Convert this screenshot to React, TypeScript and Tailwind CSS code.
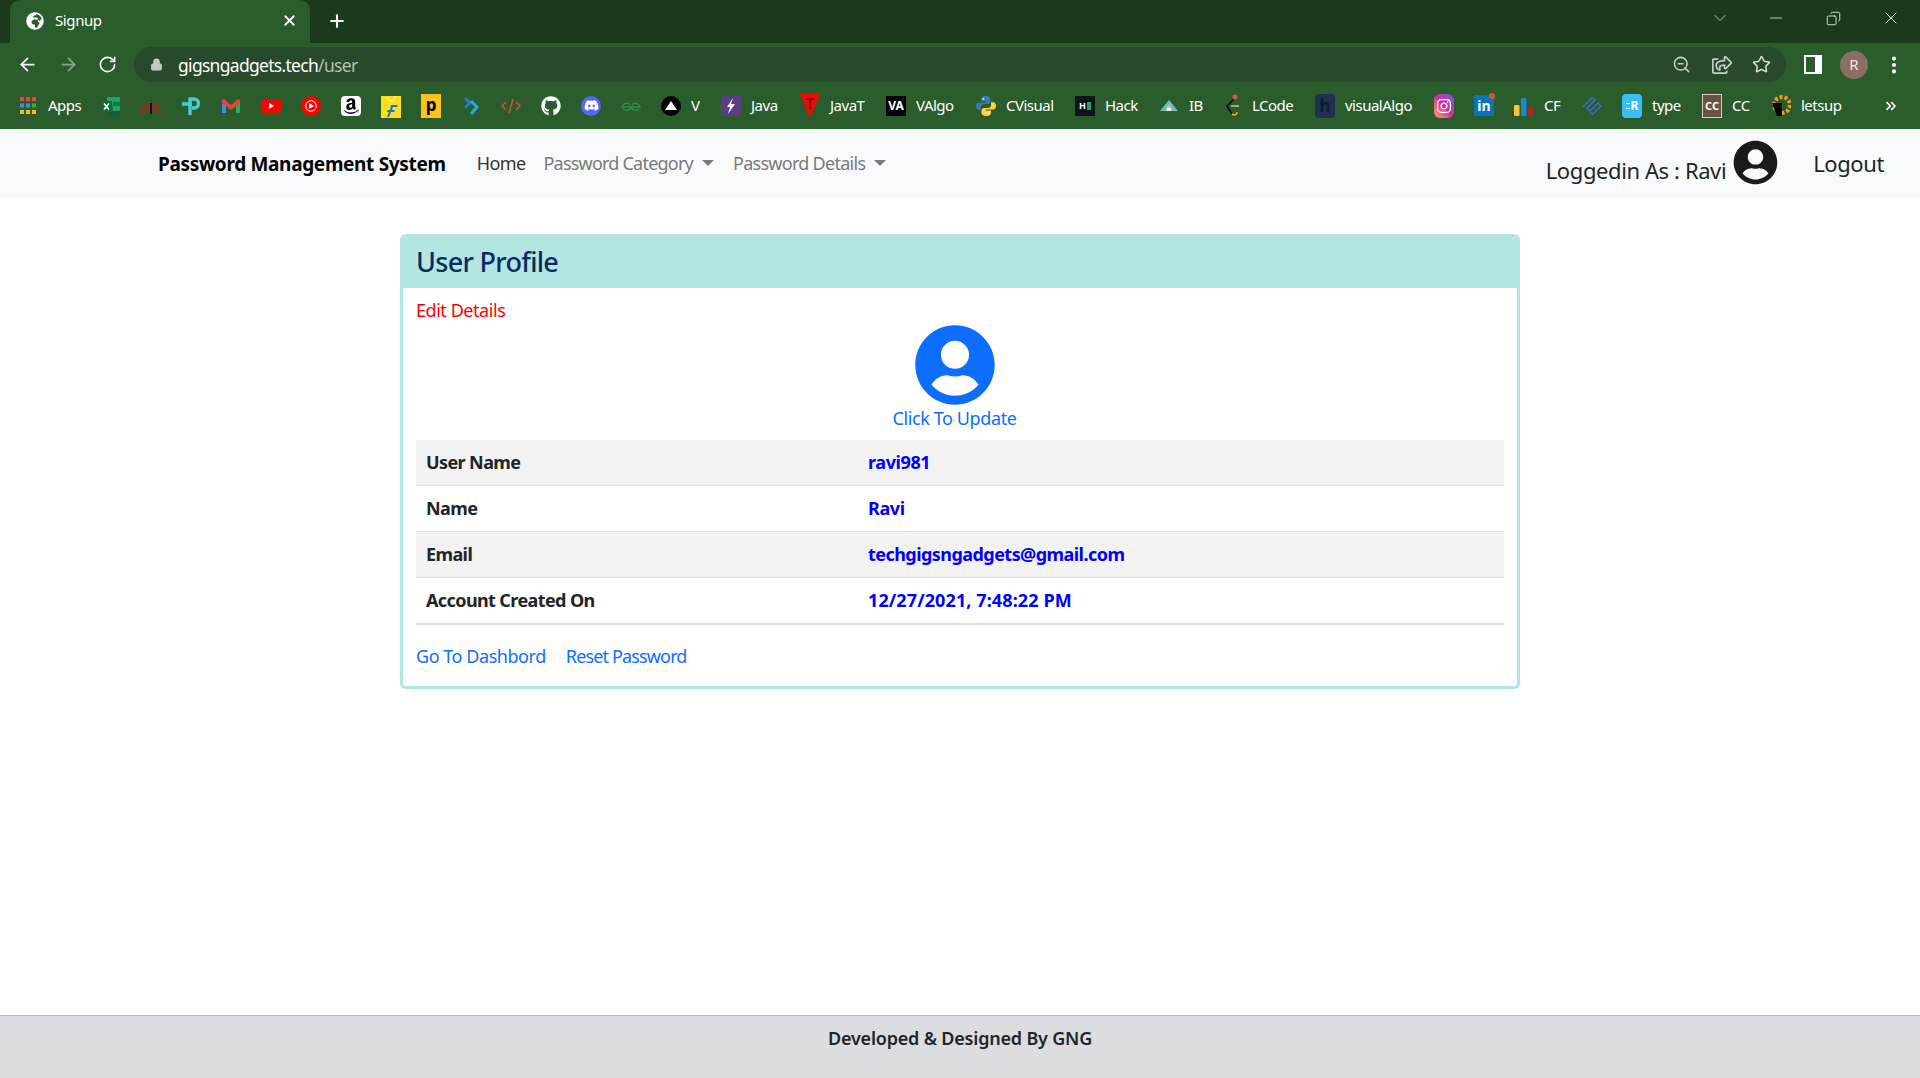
import React from 'react';
import { ArrowLeft, ArrowRight, RotateCw, Lock, Plus, X, ChevronDown, Minus, ZoomOut, Star, Copy, EllipsisVertical, ChevronsRight } from 'lucide-react';
import { FaGithub, FaDiscord, FaAmazon, FaGlobeAfrica, FaInstagram, FaUserCircle, FaRegShareSquare } from 'react-icons/fa';

const Box = ({ className, children }: { className: string; children?: React.ReactNode }) => (
  <span className={`flex h-5 w-5 items-center justify-center ${className}`}>{children}</span>
);

const icons: Record<string, React.ReactNode> = {
  apps: (
    <svg viewBox="0 0 16 17" className="mr-[4px] h-[17px] w-4">
      <path fill="#ea4335" d="M0 0h4v4H0zM6 0h4v4H6zM12 0h4v4h-4z" />
      <path fill="#4285f4" d="M0 6.500h4v4H0zM6 6.500h4v4H6z" />
      <path fill="#34a853" d="M12 6.500h4v4h-4z" />
      <path fill="#fbbc04" d="M0 13h4v4H0zM6 13h4v4H6zM12 13h4v4h-4z" />
    </svg>
  ),
  excel: (
    <svg viewBox="0 0 20 20" className="h-5 w-5">
      <path fill="#21a366" d="M6 1h13v18H6z" />
      <path fill="#107c41" d="M12 6h7v4h-7zM6 10h6v5H6z" />
      <path fill="#185c37" d="M6 15h13v4H6z" />
      <path fill="#0f6b3a" d="M0 5h11v11H0z" />
      <path stroke="#fff" strokeWidth="1.6" d="M3 7.500l5 6M8 7.500l-5 6" />
    </svg>
  ),
  gauge: (
    <svg viewBox="0 0 20 20" className="h-5 w-5" fill="none" stroke="#d3131b" strokeWidth="1.5">
      <path d="M1 17a9 9 0 0 1 18 0M5 17a5 5 0 0 1 10 0" />
      <path stroke="#111" strokeWidth="2" d="M10 7v11" />
    </svg>
  ),
  tp: (
    <svg viewBox="0 0 20 20" className="h-5 w-5" fill="none" stroke="#4acbd6" strokeWidth="3.4">
      <path d="M1 8h8v11" />
      <path d="M9 10V3h4a4.500 4.500 0 0 1 0 9h-2" />
    </svg>
  ),
  gmail: (
    <svg viewBox="0 0 20 20" className="h-5 w-5">
      <path fill="#4285f4" d="M1 4h4v13H1z" />
      <path fill="#34a853" d="M15 4h4v13h-4z" />
      <path fill="#ea4335" d="M1 4l2-1 7 6 7-6 2 1v3l-9 7-9-7z" />
    </svg>
  ),
  youtube: (
    <svg viewBox="0 0 20 20" className="h-5 w-5">
      <rect x="0" y="3" width="20" height="14" rx="3" fill="#f00" />
      <path fill="#fff" d="M8 7l5 3-5 3z" />
    </svg>
  ),
  ytmusic: (
    <svg viewBox="0 0 20 20" className="h-5 w-5">
      <circle cx="10" cy="10" r="10" fill="#f00" />
      <circle cx="10" cy="10" r="5.300" fill="none" stroke="#fff" />
      <path fill="#fff" d="M8 7l5 3-5 3z" />
    </svg>
  ),
  amazon: (
    <Box className="rounded-sm bg-white">
      <FaAmazon className="h-[18px] w-[18px] text-black" />
    </Box>
  ),
  flipkart: (
    <svg viewBox="0 0 20 24" className="h-6 w-5">
      <path fill="#f9e11e" d="M0 2h20v22H0z" />
      <path fill="none" stroke="#fff6a8" d="M6 3c0 5 8 5 8 0" />
      <path fill="#1f74ba" d="M10 11h7l-1 2h-4l-1 3h3l-1 2h-3l-2 5H6l2-5H6l1-2h2z" />
    </svg>
  ),
  paytm: (
    <Box className="h-6 bg-[#fcc419] pb-[3px] text-[17px] leading-none font-bold text-black">p</Box>
  ),
  arrow: (
    <svg viewBox="0 0 20 20" className="h-5 w-5" fill="none" stroke="#29a9e0" strokeWidth="3">
      <path d="M4 2l5 5-5 5" stroke="#1f7fc0" />
      <path d="M10 5l6 6-6 7" />
    </svg>
  ),
  code: (
    <svg viewBox="0 0 20 20" className="h-5 w-5" fill="none" stroke="#e04a3a" strokeWidth="1.500">
      <path d="M5 6l-4 4 4 4M15 6l4 4-4 4M12 3l-4 14" />
    </svg>
  ),
  github: <FaGithub className="h-5 w-5 text-white" />,
  discord: (
    <Box className="rounded-full bg-[#5865f2]">
      <FaDiscord className="h-[15px] w-[15px] text-white" />
    </Box>
  ),
  geeks: (
    <svg viewBox="0 0 20 20" className="h-5 w-5" fill="none" stroke="#2f8d46" strokeWidth="1.500">
      <path d="M10 11H1c1-4 6-5 8-2M10 11h9c-1-4-6-5-8-2M10 11c-1 4-6 4-8 2M10 11c1 4 6 4 8 2" />
    </svg>
  ),
  vercel: (
    <svg viewBox="0 0 20 20" className="h-5 w-5">
      <circle cx="10" cy="10" r="10" fill="#000" />
      <path fill="#fff" d="M10 5l6 9H4z" />
    </svg>
  ),
  bolt: (
    <Box className="bg-[#5a3e85]">
      <svg viewBox="0 0 20 20" className="h-5 w-5">
        <path fill="#fff" d="M12 2L6 11h3l-2 7 7-10h-4z" />
      </svg>
    </Box>
  ),
  tpoint: (
    <svg viewBox="0 0 20 24" className="h-6 w-5">
      <path fill="#f00" d="M0 0h20L10 24z" />
      <path fill="#7a0c0c" d="M6 4h8v2h-3v9H9V6H6z" />
    </svg>
  ),
  valgo: (
    <Box className="bg-black text-[12px] leading-none font-bold text-white">VA</Box>
  ),
  python: (
    <svg viewBox="0 0 20 20" className="h-5 w-5">
      <path fill="#3d7aab" d="M10 0C6 0 5 1.500 5 3v2.500h5.200v1H3c-2 0-3 1.500-3 3.500s1 3.800 3 3.800h2V11c0-1.800 1.200-3 3-3h4c1.300 0 2.500-1.100 2.500-2.500V3c0-1.500-1.500-3-4.500-3z" />
      <path fill="#ffd43b" d="M10 20c4 0 5-1.500 5-3v-2.500H9.800v-1H17c2 0 3-1.500 3-3.500s-1-3.800-3-3.800h-2V9c0 1.800-1.200 3-3 3H8c-1.300 0-2.500 1.100-2.500 2.500V17c0 1.500 1.500 3 4.500 3z" />
      <circle cx="7.500" cy="2.800" r="0.900" fill="#fff" />
      <circle cx="12.500" cy="17.200" r="0.900" fill="#fff" />
    </svg>
  ),
  hack: (
    <Box className="gap-[1px] bg-[#0e141e] text-[9px] leading-none font-bold text-white">
      H<span className="h-2 w-1 bg-[#1ba94c]" />
    </Box>
  ),
  ib: (
    <svg viewBox="0 0 20 20" className="h-5 w-5">
      <path fill="#5cc6d0" d="M10 4l9 11h-5l-4-5-4 5H1z" />
      <path fill="#f4b860" d="M10 8l4 7H6z" />
      <path fill="#eef" d="M8 12h4v3H8z" />
    </svg>
  ),
  lcode: (
    <svg viewBox="0 0 20 24" className="h-6 w-5" fill="none" strokeWidth="1.700">
      <path stroke="#111" d="M12 5L5 12l5 8" />
      <path stroke="#f89f1b" d="M10 20c3 2 5 0 5-2" />
      <path stroke="#b3b3b3" d="M9 12h8" />
      <circle cx="13" cy="3" r="2.500" fill="#d9534f" stroke="none" />
    </svg>
  ),
  h: (
    <Box className="h-6 rounded-sm bg-[#1f3050] text-[17px] leading-none font-bold text-[#0f1c33]">h</Box>
  ),
  instagram: (
    <Box className="h-6 rounded-md bg-gradient-to-tr from-[#f9a03f] via-[#d6249f] to-[#5b51d8]">
      <FaInstagram className="h-4 w-4 text-white" />
    </Box>
  ),
  linkedin: (
    <Box className="relative h-[21px] bg-[#0a75b5] text-[14px] leading-none font-bold text-white">
      in
      <span className="absolute -top-[2px] -right-[1px] h-[6px] w-[6px] rounded-full bg-[#e0533d]" />
    </Box>
  ),
  cf: (
    <svg viewBox="0 0 20 20" className="h-5 w-5">
      <rect x="0" y="9" width="5.500" height="11" rx="1" fill="#f4c542" />
      <rect x="7" y="2" width="5.500" height="18" rx="1" fill="#1f8acb" />
      <rect x="14" y="11" width="5.500" height="9" rx="1" fill="#b5202a" />
    </svg>
  ),
  swirl: (
    <svg viewBox="0 0 20 20" className="h-5 w-5" fill="none" stroke="#4166d5" strokeWidth="1.500">
      <path d="M1 11l9-9 3 2-8 8 3 3 8-8 3 3-8 8-3-1" />
    </svg>
  ),
  rtype: (
    <Box className="h-6 gap-[1px] rounded-sm bg-[#38bdf8] text-[12px] leading-none font-bold text-white">
      <span className="h-[6px] w-1 border-y border-white" />R
    </Box>
  ),
  cc: (
    <Box className="h-6 border border-[#d8cfc0] bg-[#6b5344] text-[11px] leading-none font-bold text-white">CC</Box>
  ),
  letsup: (
    <svg viewBox="0 0 20 24" className="h-6 w-5">
      <circle cx="11" cy="11" r="8" fill="none" stroke="#f79a1e" strokeWidth="4" strokeDasharray="3 2" />
      <path fill="#000" d="M1 9h10v13H6z" />
    </svg>
  ),
};

// label widths are pinned so the bar keeps the spacing of the original font
const bookmarks = [
  { icon: 'apps', label: 'Apps', width: '-ml-[2px] w-[33px]' },
  { icon: 'excel' }, { icon: 'gauge' }, { icon: 'tp' }, { icon: 'gmail' }, { icon: 'youtube' }, { icon: 'ytmusic' },
  { icon: 'amazon' }, { icon: 'flipkart' }, { icon: 'paytm' }, { icon: 'arrow' }, { icon: 'code' }, { icon: 'github' },
  { icon: 'discord' }, { icon: 'geeks' },
  { icon: 'vercel', label: 'V', width: 'w-[10px]' },
  { icon: 'bolt', label: 'Java', width: 'w-[29px]' },
  { icon: 'tpoint', label: 'JavaT', width: 'w-[36px]' },
  { icon: 'valgo', label: 'VAlgo', width: 'w-[40px]' },
  { icon: 'python', label: 'CVisual', width: 'w-[49px]' },
  { icon: 'hack', label: 'Hack', width: 'w-[34px]' },
  { icon: 'ib', label: 'IB', width: 'w-[13px]' },
  { icon: 'lcode', label: 'LCode', width: 'w-[43px]' },
  { icon: 'h', label: 'visualAlgo', width: 'w-[69px]' },
  { icon: 'instagram' }, { icon: 'linkedin' },
  { icon: 'cf', label: 'CF', width: 'w-[18px]' },
  { icon: 'swirl' },
  { icon: 'rtype', label: 'type', width: 'w-[30px]' },
  { icon: 'cc', label: 'CC', width: 'w-[19px]' },
  { icon: 'letsup', label: 'letsup', width: 'w-[41px]' },
];

const rows = [
  { name: 'User Name', value: 'ravi981', bg: 'bg-[#f2f2f2]', track: 'tracking-[-0.4px]', height: 'h-[46px]' },
  { name: 'Name', value: 'Ravi', bg: 'bg-white', track: 'tracking-[-0.4px]', height: 'h-[46px]' },
  { name: 'Email', value: 'techgigsngadgets@gmail.com', bg: 'bg-[#f2f2f2]', track: 'tracking-[-0.55px]', height: 'h-[46px]' },
  { name: 'Account Created On', value: '12/27/2021, 7:48:22 PM', bg: 'bg-white', track: 'tracking-[0.1px]', height: 'h-[45px]' },
];

const BrowserChrome = () => (
  <div className="text-white">
    <div className="flex h-[43px] items-end bg-[#1b3a1b] pl-[10px]">
      <div className="relative flex h-[43px] w-[300px] items-center rounded-t-[10px] bg-[#2a5c2c] pr-[12px] pb-[2px] pl-[16px]">
        <FaGlobeAfrica className="h-[18px] w-[18px]" />
        <span className="ml-[11px] flex-1 text-[15px] tracking-[-0.4px]">Signup</span>
        <X className="h-[17px] w-[17px]" strokeWidth={2.5} />
      </div>
      <Plus className="mb-[12px] ml-[17px] h-5 w-5" strokeWidth={2.5} />
      <div className="mb-[15px] flex flex-1 items-center justify-end text-[#dfe6df]">
        <ChevronDown className="mr-[36px] h-5 w-5" strokeWidth={1} />
        <Minus className="mr-[40px] h-5 w-5" strokeWidth={1} />
        <Copy className="mr-[40px] h-[15px] w-[15px] -scale-x-100" strokeWidth={1.5} />
        <X className="mr-[19px] h-5 w-5" strokeWidth={1.2} />
      </div>
    </div>
    <div className="flex h-[43px] items-center bg-[#2a5c2c] pl-[17px]">
      <ArrowLeft className="h-[21px] w-[21px]" strokeWidth={2} />
      <ArrowRight className="ml-[20px] h-[21px] w-[21px] text-[#8ba58c]" strokeWidth={2} />
      <RotateCw className="ml-[19px] h-[19px] w-[19px]" strokeWidth={2} />
      <div className="ml-[17px] flex h-[35px] flex-1 items-center rounded-full bg-[#28492a] pr-[15px] pl-[16px]">
        <Lock className="h-[13px] w-[13px] fill-[#bfc9bf] text-[#bfc9bf]" />
        <span className="ml-[15px] flex-1 pt-[2px] text-[17.5px] tracking-[-0.7px]">
          gigsngadgets.tech<span className="text-[#b3c0b3]">/user</span>
        </span>
        <ZoomOut className="h-[19px] w-[19px] text-[#c6cfc6]" />
        <FaRegShareSquare className="ml-[21px] h-[18px] w-[20px] text-[#c6cfc6]" />
        <Star className="ml-[20px] h-[19px] w-[19px] text-[#d3dad3]" />
      </div>
      <div className="ml-[18px] flex h-[19px] w-[18px] justify-end border-2 border-white">
        <span className="h-full w-[5px] bg-white" />
      </div>
      <span className="ml-[18px] flex h-[28px] w-[28px] items-center justify-center rounded-full bg-[#8d6e63] text-[15px] text-[#f2e6e0]">R</span>
      <EllipsisVertical className="mr-[15px] ml-[15px] h-[22px] w-[22px]" strokeWidth={2.5} />
    </div>
    <div className="flex h-[43px] items-center bg-[#2a5c2c] pb-[4px] pl-[10px]">
      {bookmarks.map((b, i) => (
        <div key={i} className="flex shrink-0 items-center gap-[10px] px-[10px]">
          <span className="flex h-5 w-5 items-center justify-center">{icons[b.icon]}</span>
          {b.label && <span className={`${b.width} text-[15px] tracking-[-0.5px] whitespace-nowrap`}>{b.label}</span>}
        </div>
      ))}
      <ChevronsRight className="mr-[21px] ml-auto h-4 w-4" strokeWidth={2.5} />
    </div>
  </div>
);

const Navbar = () => (
  <nav className="flex h-[70px] items-center bg-[#f8f9fa] pr-[36px] pb-[2px] pl-[158px] text-[#212529]">
    <span className="pt-[2px] text-[19px] font-bold tracking-[-0.33px] text-black">Password Management System</span>
    <a className="ml-[31px] text-[18px] tracking-[-0.6px] text-[#333]">Home</a>
    <a className="ml-[18px] flex items-center text-[18px] tracking-[-0.78px] text-[#7a7a7a]">
      Password Category
      <span className="ml-[9px] h-0 w-0 border-x-[6px] border-t-[6px] border-x-transparent border-t-[#7a7a7a]" />
    </a>
    <a className="ml-[19px] flex items-center text-[18px] tracking-[-0.72px] text-[#7a7a7a]">
      Password Details
      <span className="ml-[9px] h-0 w-0 border-x-[6px] border-t-[6px] border-x-transparent border-t-[#7a7a7a]" />
    </a>
    <span className="mt-[14px] ml-auto text-[22px] tracking-[-0.4px]">Loggedin As : Ravi</span>
    <FaUserCircle className="mb-[2px] ml-[7px] h-[45px] w-[45px] text-[#1a1a1a]" />
    <a className="ml-[35px] text-[22px] tracking-[-0.4px]">Logout</a>
  </nav>
);

const ProfileCard = () => (
  <div className="mx-auto mt-[35px] w-[1120px] overflow-hidden rounded-[6px] border-x-[3px] border-b-[3px] border-[#b2e6e1]">
    <h1 className="flex h-[54px] items-center bg-[#b2e6e1] px-[13px] text-[27px] leading-none font-medium tracking-[-0.7px] text-[#0a2a63]">
      User Profile
    </h1>
    <div className="px-[13px] pt-[8px] pb-[16px]">
      <a className="block text-[18px] leading-[29px] tracking-[-0.45px] text-[#f00]">Edit Details</a>
      <div className="flex flex-col items-center pr-[11px]">
        <FaUserCircle className="-my-[1.5px] h-[82px] w-[82px] text-[#0d6efd]" />
        <a className="mt-[2px] text-[18px] leading-[25px] tracking-[-0.4px] text-[#0d6efd]">Click To Update</a>
      </div>
      <div className="mt-[9px] border-b-2 border-[#dee2e6]">
        {rows.map((r, i) => (
          <div key={r.name} className={`flex items-center ${r.height} ${r.bg} ${i < 3 ? 'border-b border-[#dee2e6]' : ''}`}>
            <span className="w-[442px] pl-[10px] text-[18px] font-bold tracking-[-0.6px] text-[#212529]">{r.name}</span>
            <span className={`pl-[10px] text-[18px] font-bold text-[#00f] ${r.track}`}>{r.value}</span>
          </div>
        ))}
      </div>
      <div className="mt-[17px] flex gap-[20px] text-[18px] leading-[28px] text-[#0d6efd]">
        <a className="tracking-[-0.45px]">Go To Dashbord</a>
        <a className="tracking-[-0.85px]">Reset Password</a>
      </div>
    </div>
  </div>
);

export default function App() {
  return (
    <div className="flex h-[1078px] flex-col overflow-hidden bg-white font-['Noto_Sans',sans-serif]">
      <BrowserChrome />
      <Navbar />
      <main className="flex-1">
        <ProfileCard />
      </main>
      <footer className="h-[63px] border-t border-[#bdbdbd] bg-[#dcdde0] pt-[8px] text-center text-[18px] leading-[28px] font-semibold tracking-[-0.2px] text-[#212529]">
        Developed &amp; Designed By GNG
      </footer>
    </div>
  );
}
